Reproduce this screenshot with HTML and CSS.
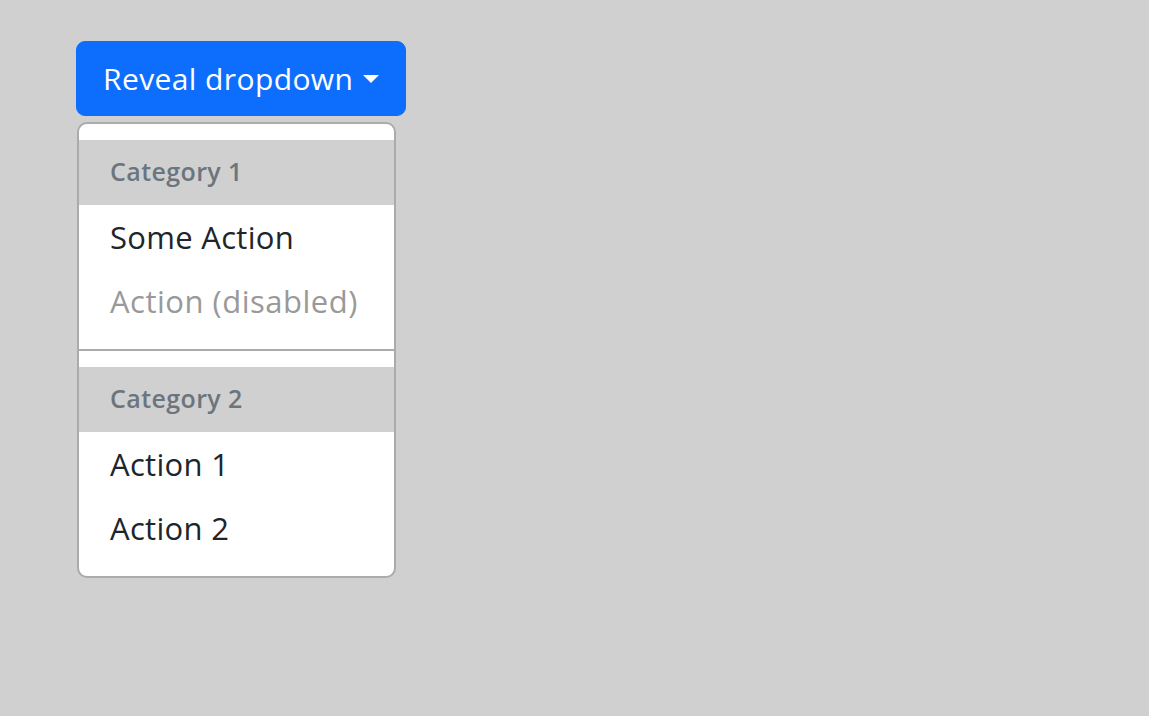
FILE: index.html
```html
<!DOCTYPE html>
<html>
<head>
<meta charset="utf-8">
<link rel="stylesheet" href="styles.css">
</head>
<body>
<div class="dropdown">
  <button class="btn">Reveal dropdown<span class="caret"></span></button>
  <ul class="menu">
    <li class="header">Category 1</li>
    <li class="item">Some Action</li>
    <li class="item disabled">Action (disabled)</li>
    <li class="divider"></li>
    <li class="header">Category 2</li>
    <li class="item">Action 1</li>
    <li class="item">Action 2</li>
  </ul>
</div>
</body>
</html>
```
FILE: styles.css
```css
html, body {
  margin: 0;
  background: #d0d0d0;
}
body {
  padding: 41px 76px;
  font-family: "Open Sans", "Noto Sans", sans-serif;
}
.dropdown {
  display: flex;
  flex-direction: column;
  align-items: flex-start;
}
.btn {
  display: flex;
  align-items: center;
  height: 75px;
  width: 330px;
  padding: 0 20px 0 26px;
  background: #0d6efd;
  color: #fff;
  border: 1px solid #0d6efd;
  border-radius: 9px;
  font-family: inherit;
  font-size: 30px;
  letter-spacing: 0.4px;
  box-sizing: border-box;
}
.caret {
  display: inline-block;
  width: 0;
  height: 0;
  margin-left: 10px;
  border-top: 8px solid #fff;
  border-left: 8px solid transparent;
  border-right: 8px solid transparent;
}
.menu {
  list-style: none;
  margin: 6px 0 0 1px;
  padding: 16px 0;
  width: 319px;
  box-sizing: border-box;
  background: #fff;
  border: 2px solid #ababab;
  border-radius: 10px;
}
.header {
  height: 65px;
  display: flex;
  align-items: center;
  padding: 0 31px 3px;
  box-sizing: border-box;
  background: #d0d0d0;
  color: #6c757d;
  font-weight: 600;
  font-size: 25px;
  letter-spacing: 0.4px;
}
.item {
  height: 64px;
  display: flex;
  align-items: center;
  padding: 0 31px 1px;
  box-sizing: border-box;
  color: #212529;
  font-size: 31px;
  letter-spacing: 0.3px;
}
.item.disabled {
  color: #999999;
  letter-spacing: 0.5px;
}
.divider {
  height: 0;
  margin: 16px 0 16px;
  border-top: 2px solid #ababab;
}
```
